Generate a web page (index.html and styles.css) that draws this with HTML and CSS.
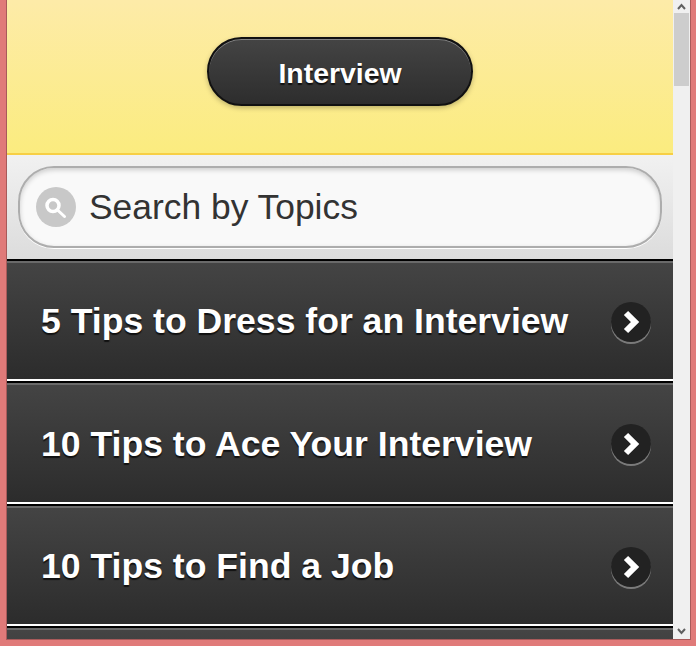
FILE: index.html
```html
<!DOCTYPE html>
<html lang="en">
<head>
<meta charset="utf-8">
<title>Interview</title>
<link rel="stylesheet" href="styles.css">
</head>
<body>
<div class="frame">
  <div class="window">
    <main class="page">
      <header class="header">
        <a class="btn">Interview</a>
      </header>
      <div class="searchbar">
        <div class="search">
          <span class="search-icon">
            <svg width="24" height="24" viewBox="0 0 24 24"><circle cx="9" cy="10.500" r="6" fill="none" stroke="#fff" stroke-width="3.500"/><path d="M13.500 15l7 6.500" stroke="#fff" stroke-width="3" stroke-linecap="round"/></svg>
          </span>
          <span class="search-text">Search by Topics</span>
        </div>
      </div>
      <ul class="list">
        <li class="row"><span class="row-title">5 Tips to Dress for an Interview</span><span class="arrow"><svg width="20" height="26" viewBox="0 0 20 26"><path d="M5 4l9 9-9 9" fill="none" stroke="#fff" stroke-width="6"/></svg></span></li>
        <li class="row"><span class="row-title">10 Tips to Ace Your Interview</span><span class="arrow"><svg width="20" height="26" viewBox="0 0 20 26"><path d="M5 4l9 9-9 9" fill="none" stroke="#fff" stroke-width="6"/></svg></span></li>
        <li class="row"><span class="row-title">10 Tips to Find a Job</span><span class="arrow"><svg width="20" height="26" viewBox="0 0 20 26"><path d="M5 4l9 9-9 9" fill="none" stroke="#fff" stroke-width="6"/></svg></span></li>
        <li class="row row-cut"></li>
      </ul>
    </main>
    <aside class="scrollbar">
      <svg class="sb-arrow" width="9" height="7" viewBox="0 0 9 7"><path d="M1 6l3.500-4 3.500 4" fill="none" stroke="#606060" stroke-width="2"/></svg>
      <div class="sb-thumb"></div>
      <svg class="sb-arrow sb-down" width="9" height="7" viewBox="0 0 9 7"><path d="M1 1l3.500 4 3.500-4" fill="none" stroke="#606060" stroke-width="2"/></svg>
    </aside>
  </div>
</div>
</body>
</html>
```
FILE: styles.css
```css
* { box-sizing: border-box; }
html, body { margin: 0; padding: 0; height: 100%; overflow: hidden; }
body { background: #e07a79; font-family: "Liberation Sans", Arial, sans-serif; }
.frame { width: 696px; height: 646px; padding: 0 5px 6px 6px; }
.window { display: flex; height: 640px; border-left: 1px solid #a85a5a; border-right: 1px solid #a85a5a; border-bottom: 1px solid #a85a5a; background: #fff; overflow: hidden; }
.page { width: 666px; height: 639px; overflow: hidden; }
.header { height: 155px; display: flex; justify-content: center; padding-top: 37px; background: linear-gradient(#fdeba8, #fbec7f); border-bottom: 2px solid #f7cf45; }
.btn { width: 266px; height: 69px; border: 2px solid #111; border-radius: 35px; background: linear-gradient(#444, #2d2d2d); box-shadow: inset 0 1px 0 rgba(255,255,255,.35), 0 2px 5px rgba(0,0,0,.25); color: #fff; font-weight: bold; font-size: 28.400px; line-height: 68px; text-align: center; text-shadow: 0 2px 1px #111; }
.searchbar { height: 103.500px; padding: 11px 11px 0; background: linear-gradient(#f1f1f1, #dcdcdc); }
.search { height: 82px; display: flex; align-items: center; gap: 13px; padding-left: 16px; border: 2px solid #adadad; border-radius: 36px; background: #f9f9f9; box-shadow: inset 0 2px 5px rgba(0,0,0,.18), 0 1px 0 #fff; }
.search-icon { width: 40px; height: 40px; border-radius: 50%; background: #c8c8c8; display: flex; align-items: center; justify-content: center; }
.search-text { font-size: 35.400px; color: #333; }
.list { list-style: none; margin: 0; padding: 0; border-top: 2px solid #000; background: #000; }
.row { height: 120.500px; margin-bottom: 2px; display: flex; align-items: center; justify-content: space-between; padding: 2px 22px 0 34px; border-top: 2px solid #6a6a6a; border-bottom: 2px solid #fff; background: linear-gradient(#444, #2c2c2c); color: #fff; }
.row-title { font-size: 35.600px; font-weight: bold; text-shadow: 0 2px 1px #111; }
.arrow { width: 40px; height: 40px; border-radius: 50%; background: #222; box-shadow: 0 2px 0 rgba(255,255,255,.35); display: flex; align-items: center; justify-content: center; }
.scrollbar { width: 17px; background: #f0f0f0; display: flex; flex-direction: column; align-items: center; }
.sb-arrow { margin-top: 3px; }
.sb-thumb { width: 15px; height: 73px; margin-top: 3px; background: #cdcdcd; }
.sb-down { margin-top: auto; margin-bottom: 4px; }
```
